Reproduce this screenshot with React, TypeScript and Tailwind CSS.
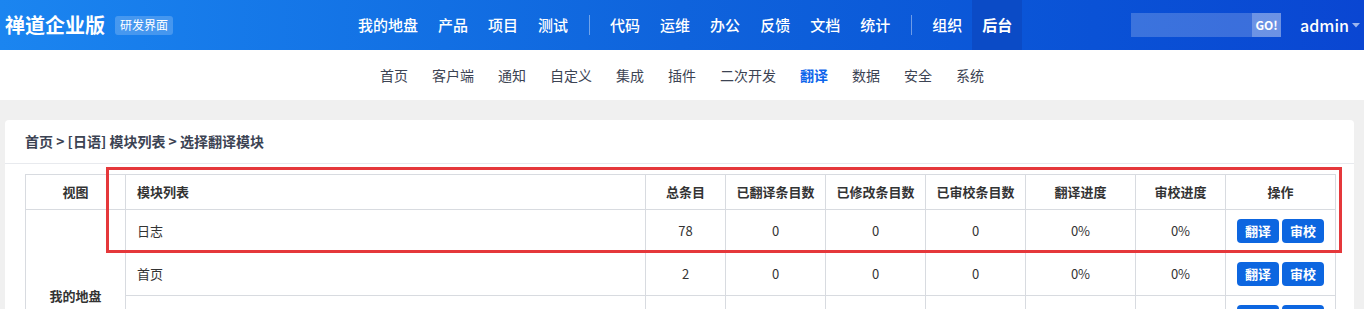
import React from "react";

const font = { fontFamily: '"Noto Sans CJK SC", "Noto Sans", sans-serif' };

const navA = ["我的地盘", "产品", "项目", "测试"];
const navB = ["代码", "运维", "办公", "反馈", "文档", "统计"];
const sub = ["首页", "客户端", "通知", "自定义", "集成", "插件", "二次开发", "翻译", "数据", "安全", "系统"];

const rows = [
  { name: "日志", total: "78" },
  { name: "首页", total: "2" },
  { name: "待办", total: "45" },
  { name: "日程", total: "31" },
];

function Sep() {
  return (
    <div className="w-[22px] flex justify-center">
      <div className="w-px h-[20px] bg-white/40" />
    </div>
  );
}

function Btn({ children }: { children: React.ReactNode }) {
  return (
    <span className="inline-flex items-center justify-center w-[42px] h-[24px] rounded-[4px] bg-[#0d66e0] text-white text-[13px] font-bold">
      {children}
    </span>
  );
}

export default function App() {
  const th = "border border-[#d8dbe0] font-bold text-[13px] text-[#333] h-[35px]";
  const td = "border border-[#d8dbe0] text-[13px] text-[#333] h-[43px] text-center";
  return (
    <div style={font} className="w-[1364px] h-[309px] overflow-hidden bg-[#f0f0f0] relative">
      <header className="h-[50px] flex items-center bg-gradient-to-r from-[#1b85f0] via-[#0f63dc] to-[#0a46d2] text-white">
        <div className="pl-[5px] text-[20px] font-bold leading-none">禅道企业版</div>
        <div className="ml-[10px] h-[19px] px-[5px] rounded-[3px] bg-white/20 text-[12px] flex items-center">研发界面</div>
        <nav className="ml-[175px] flex items-stretch h-[50px] text-[15px] font-medium">
          {navA.map((n) => (
            <div key={n} className="px-[10px] flex items-center">{n}</div>
          ))}
          <div className="flex items-center"><Sep /></div>
          {navB.map((n) => (
            <div key={n} className="px-[10px] flex items-center">{n}</div>
          ))}
          <div className="flex items-center"><Sep /></div>
          <div className="px-[10px] flex items-center">组织</div>
          <div className="px-[10px] flex items-center font-bold bg-[#0b4bc6]">后台</div>
        </nav>
        <div className="ml-auto flex items-center">
          <div className="w-[121px] h-[24px] bg-white/20" />
          <div className="w-[29px] h-[24px] bg-white/40 text-[12px] font-bold flex items-center justify-center">GO!</div>
          <div className="ml-[19px] text-[16px] font-medium">admin</div>
          <svg width="8" height="5" viewBox="0 0 8 5" className="ml-[3px] mr-[4px]">
            <path d="M0 0 L8 0 L4 4.5 Z" fill="rgba(255,255,255,0.6)" />
          </svg>
        </div>
      </header>
      <div className="h-[50px] bg-white flex items-center justify-center text-[14px] text-[#3c4353]">
        {sub.map((s) => (
          <div key={s} className={"px-[12px] " + (s === "翻译" ? "text-[#0c64eb] font-bold" : "")}>{s}</div>
        ))}
      </div>
      <div className="pt-[20px] pl-[5px] pr-[10px]">
        <div className="bg-white rounded-[4px] h-[300px]">
          <div className="h-[44px] border-b border-[#e8eaee] flex items-center pl-[20px] text-[14px] font-bold text-[#3c4353]">
            首页 &gt; [日语] 模块列表 &gt; 选择翻译模块
          </div>
          <div className="pt-[10px] pl-[20px]">
            <table className="border-collapse table-fixed w-[1310px]">
              <colgroup>
                <col className="w-[100px]" />
                <col className="w-[520px]" />
                <col className="w-[80px]" />
                <col className="w-[100px]" />
                <col className="w-[100px]" />
                <col className="w-[100px]" />
                <col className="w-[110px]" />
                <col className="w-[90px]" />
                <col className="w-[110px]" />
              </colgroup>
              <thead>
                <tr>
                  <th className={th}>视图</th>
                  <th className={th + " text-left pl-[11px]"}>模块列表</th>
                  <th className={th}>总条目</th>
                  <th className={th}>已翻译条目数</th>
                  <th className={th}>已修改条目数</th>
                  <th className={th}>已审校条目数</th>
                  <th className={th}>翻译进度</th>
                  <th className={th}>审校进度</th>
                  <th className={th}>操作</th>
                </tr>
              </thead>
              <tbody>
                {rows.map((r, i) => (
                  <tr key={r.name}>
                    {i === 0 && (
                      <td rowSpan={4} className={td + " font-bold"}>我的地盘</td>
                    )}
                    <td className={td + " !text-left pl-[11px]"}>{r.name}</td>
                    <td className={td}>{r.total}</td>
                    <td className={td}>0</td>
                    <td className={td}>0</td>
                    <td className={td}>0</td>
                    <td className={td}>0%</td>
                    <td className={td}>0%</td>
                    <td className={td}>
                      <div className="flex justify-center gap-[3px]">
                        <Btn>翻译</Btn>
                        <Btn>审校</Btn>
                      </div>
                    </td>
                  </tr>
                ))}
              </tbody>
            </table>
          </div>
        </div>
      </div>
      <div className="absolute left-[106px] top-[167px] w-[1236px] h-[86px] border-[3px] border-[#e5383b] pointer-events-none" />
    </div>
  );
}
